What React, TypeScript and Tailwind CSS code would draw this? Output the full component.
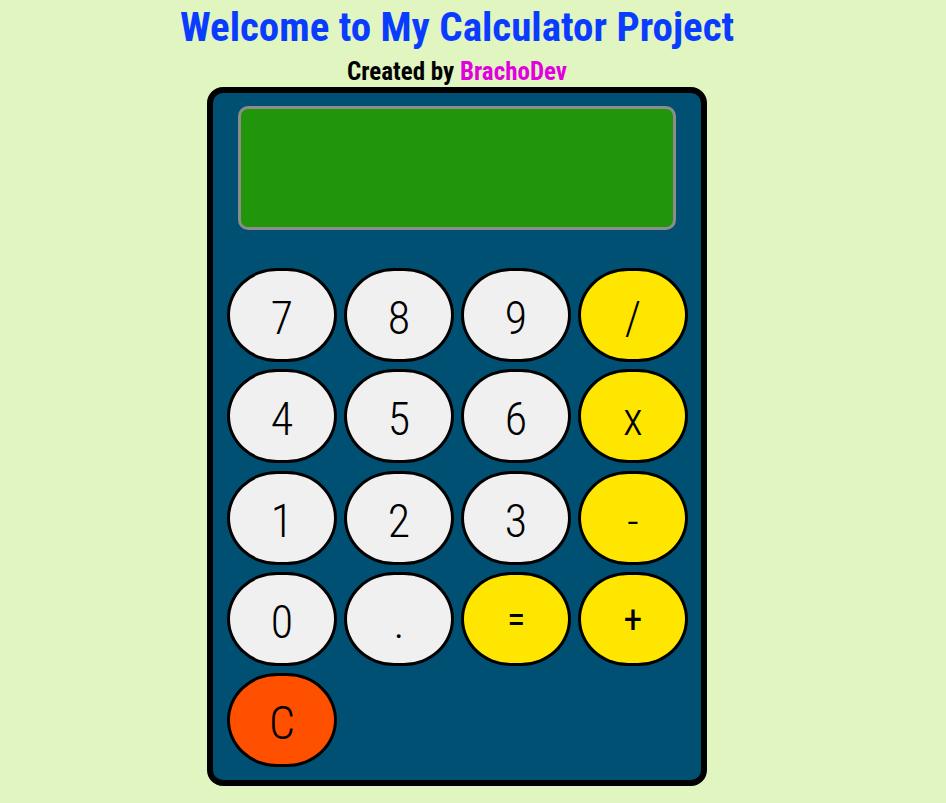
const font = "font-['Roboto','Liberation_Sans',sans-serif] [font-stretch:condensed]";

type Key = { label: string; kind: "num" | "op" | "clear"; size?: string };

const KEYS: Key[] = [
  { label: "7", kind: "num" },
  { label: "8", kind: "num" },
  { label: "9", kind: "num" },
  { label: "/", kind: "op" },
  { label: "4", kind: "num" },
  { label: "5", kind: "num" },
  { label: "6", kind: "num" },
  { label: "x", kind: "op" },
  { label: "1", kind: "num" },
  { label: "2", kind: "num" },
  { label: "3", kind: "num" },
  { label: "-", kind: "op" },
  { label: "0", kind: "num" },
  { label: ".", kind: "num" },
  { label: "=", kind: "op", size: "text-[38px] font-normal pb-[3px]" },
  { label: "+", kind: "op", size: "text-[38px] font-normal pb-[3px]" },
  { label: "C", kind: "clear" },
];

const keyColors: Record<Key["kind"], string> = {
  num: "bg-[#f0f0f0]",
  op: "bg-[#ffe600]",
  clear: "bg-[#ff5000]",
};

export default function App() {
  return (
    <div className={`min-h-[803px] bg-[#e0f5bf] ${font}`}>
      <div className="w-[914px] flex flex-col items-center">
        <h1 className="h-[52px] pt-[3px] text-[41px] leading-[48px] font-bold text-[#0a3cff] whitespace-nowrap">
          Welcome to My Calculator Project
        </h1>
        <h2 className="h-[35px] pt-[4px] text-[25px] leading-[32px] font-bold text-black whitespace-nowrap">
          Created by <span className="text-[#e000e0]">BrachoDev</span>
        </h2>
        <div className="w-[500px] border-[6px] border-black rounded-[16px] bg-[#005073] p-[13px] flex flex-col items-center">
          <div className="w-[438px] h-[124px] border-[3px] border-[#8c8c8c] rounded-[10px] bg-[#21960a]" />
          <div className="mt-[38px] grid grid-cols-[repeat(4,110px)] auto-rows-[94px] gap-x-[7px] gap-y-[7.25px] self-start ml-[1px]">
            {KEYS.map((k) => (
              <button
                key={k.label}
                className={`w-[110px] h-[94px] border-[3px] border-black rounded-[50px/47px] ${keyColors[k.kind]} text-black leading-none flex items-center justify-center pt-[6px] ${k.size ?? "text-[46px] font-light"}`}
              >
                {k.label}
              </button>
            ))}
          </div>
        </div>
      </div>
    </div>
  );
}
